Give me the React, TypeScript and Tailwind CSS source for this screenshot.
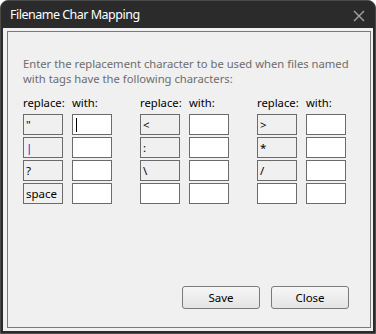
const font = { fontFamily: '"Noto Sans", "Open Sans", sans-serif' };

type Cell = { text?: string; editable?: boolean; cursor?: boolean; blue?: boolean };

const groups: { rep: Cell; with: Cell }[][] = [
  [
    { rep: { text: '"' }, with: { cursor: true } },
    { rep: { text: "|", blue: true }, with: {} },
    { rep: { text: "?" }, with: {} },
    { rep: { text: "space" }, with: {} },
  ],
  [
    { rep: { text: "<" }, with: {} },
    { rep: { text: ":" }, with: {} },
    { rep: { text: "\\" }, with: {} },
    { rep: { editable: true }, with: {} },
  ],
  [
    { rep: { text: ">" }, with: {} },
    { rep: { text: "*" }, with: {} },
    { rep: { text: "/" }, with: {} },
    { rep: { editable: true }, with: {} },
  ],
];

function Box({ cell, white }: { cell: Cell; white?: boolean }) {
  return (
    <div
      className={`h-[21px] w-[40px] border border-[#6b6b6b] px-[2px] flex items-center text-[11.5px] leading-none text-black ${
        white || cell.editable ? "bg-white" : "bg-[#f0f0f0]"
      }`}
    >
      {cell.cursor && <span className="ml-[1px] block h-[14px] w-[1px] bg-black" />}
      {cell.text && (
        <span className={cell.blue ? "text-[#1c1cd0]" : ""}>{cell.text}</span>
      )}
    </div>
  );
}

export default function App() {
  return (
    <div
      style={font}
      className="w-[376px] h-[334px] bg-[#2b2b2b] rounded-t-[8px] border border-[#4a4a4a] flex flex-col overflow-hidden"
    >
      <div className="h-[27px] shrink-0 flex items-center justify-between pl-[9px] pr-[8px] pt-[2px]">
        <span className="text-white text-[12.5px] leading-none tracking-[-0.5px]">Filename Char Mapping</span>
        <svg width="12" height="12" viewBox="0 0 12 12" className="mr-[2px]">
          <path d="M1 1L11 11M11 1L1 11" stroke="#a8a8a8" strokeWidth="1.3" />
        </svg>
      </div>
      <div className="flex-1 mx-[2px] mb-[2px] bg-[#f0f0f0] pt-[3px] pl-[4px] pr-[2px] pb-[3px] flex">
        <div className="flex-1 border border-[#7a7a7a] flex flex-col pl-[15px] pt-[24px] pr-[21px] pb-[18px]">
          <p className="text-[11.25px] leading-[15px] text-[#6d6d6d] whitespace-nowrap">
            Enter the replacement character to be used when files named
            <br />
            with tags have the following characters:
          </p>
          <div className="mt-[9px] flex gap-[28px]">
            {groups.map((rows, gi) => (
              <div key={gi} className="grid grid-cols-[40px_40px] gap-x-[9px] gap-y-[2px]">
                <div className="text-[11.25px] leading-[15px] text-black whitespace-nowrap mb-[2px]">replace:</div>
                <div className="text-[11.25px] leading-[15px] text-black mb-[2px]">with:</div>
                {rows.map((r, ri) => (
                  <div key={ri} className="contents">
                    <Box cell={r.rep} />
                    <Box cell={r.with} white />
                  </div>
                ))}
              </div>
            ))}
          </div>
          <div className="mt-auto flex justify-end gap-[11px]">
            <button className="w-[78px] h-[23px] rounded-[3px] border border-[#7a7a7a] bg-gradient-to-b from-[#f6f6f6] to-[#e4e4e4] text-[11.5px] text-black">
              Save
            </button>
            <button className="w-[78px] h-[23px] rounded-[3px] border border-[#7a7a7a] bg-gradient-to-b from-[#f6f6f6] to-[#e4e4e4] text-[11.5px] text-black">
              Close
            </button>
          </div>
        </div>
      </div>
    </div>
  );
}
